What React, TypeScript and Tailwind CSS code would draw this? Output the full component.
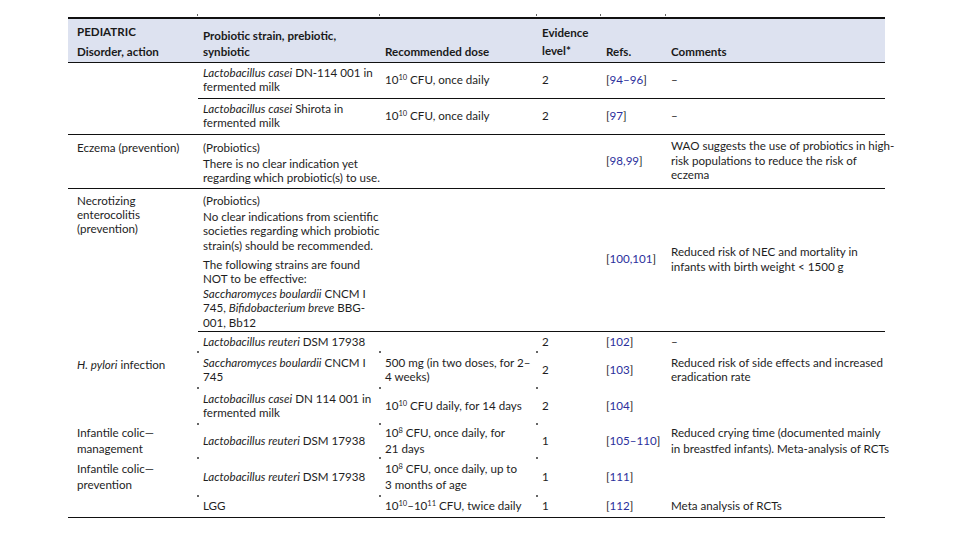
import React from "react";

const Ref = ({ n }: { n: string }) => (
  <span>
    [<span className="text-[#2b2f9c]">{n}</span>]
  </span>
);

const Tick = () => (
  <span className="absolute -top-[1px] -left-[1px] w-[2px] h-[2px] bg-[#666]" />
);

const HeadTick = () => (
  <span className="absolute -top-[5px] -left-[1px] w-[1px] h-[2px] bg-[#666]" />
);

const Sup = ({ v }: { v: string }) => (
  <sup className="text-[7.5px] -top-[4px]">{v}</sup>
);

const cell = "align-middle pl-[5px] pr-[2px] leading-[14.5px] whitespace-nowrap";
const first = "align-middle pl-[9px] pr-[2px] leading-[14.5px] whitespace-nowrap";

export default function App() {
  return (
    <div
      className="w-[960px] h-[540px] bg-white text-[#1e1e1e] text-[11.6px] overflow-hidden"
      style={{ fontFamily: "Lato, 'Open Sans', sans-serif" }}
    >
      <div className="pt-[17px] pl-[68px]">
        <table className="w-[817px] table-fixed border-collapse">
          <colgroup>
            <col className="w-[130px]" />
            <col className="w-[182px]" />
            <col className="w-[157px]" />
            <col className="w-[64px]" />
            <col className="w-[65px]" />
            <col className="w-[219px]" />
          </colgroup>
          <thead>
            <tr className="h-[44px] bg-[#dde2f0] border-t-2 border-b border-[#111] text-[#1a1a1a]">
              <th className="relative align-bottom text-left font-bold pl-[9px] pb-[2px] leading-[16px]">
                <div className="mb-[4px]">PEDIATRIC</div>
                <div>Disorder, action</div>
              </th>
              <th className="relative align-bottom text-left font-bold pl-[5px] pb-[2px] leading-[16px]">
                <HeadTick />
                <div>Probiotic strain, prebiotic,</div>
                <div>synbiotic</div>
              </th>
              <th className="relative align-bottom text-left font-bold pl-[5px] pb-[2px] leading-[16px]">
                <HeadTick />
                Recommended dose
              </th>
              <th className="relative align-bottom text-left font-bold pl-[5px] pb-[2px] leading-[18px]">
                <HeadTick />
                <div>Evidence</div>
                <div>level*</div>
              </th>
              <th className="relative align-bottom text-left font-bold pl-[5px] pb-[2px] leading-[16px]">
                <HeadTick />
                Refs.
              </th>
              <th className="relative align-bottom text-left font-bold pl-[5px] pb-[2px] leading-[16px]">
                <HeadTick />
                Comments
              </th>
            </tr>
          </thead>
          <tbody>
            {/* Group 1 */}
            <tr className="h-[36px]">
              <td rowSpan={2} className={`${first} border-b border-[#111]`}></td>
              <td className={`${cell} border-b border-[#111]`}>
                <i>Lactobacillus casei</i> DN-114 001 in
                <br />
                fermented milk
              </td>
              <td className={`${cell} border-b border-[#111]`}>
                10<Sup v="10" /> CFU, once daily
              </td>
              <td className={`${cell} border-b border-[#111]`}>2</td>
              <td className={`${cell} border-b border-[#111]`}>
                <Ref n="94–96" />
              </td>
              <td className={`${cell} border-b border-[#111]`}>–</td>
            </tr>
            <tr className="h-[36px] border-b border-[#111]">
              <td className={cell}>
                <i>Lactobacillus casei</i> Shirota in
                <br />
                fermented milk
              </td>
              <td className={cell}>
                10<Sup v="10" /> CFU, once daily
              </td>
              <td className={cell}>2</td>
              <td className={cell}>
                <Ref n="97" />
              </td>
              <td className={cell}>–</td>
            </tr>

            {/* Eczema */}
            <tr className="h-[54px] border-b border-[#111]">
              <td className={`${first} !align-top pt-[6px]`}>Eczema (prevention)</td>
              <td className={`${cell} !align-top pt-[6px]`}>
                <p className="mb-[1.5px]">(Probiotics)</p>
                <p>
                  There is no clear indication yet
                  <br />
                  regarding which probiotic(s) to use.
                </p>
              </td>
              <td className={cell}></td>
              <td className={cell}></td>
              <td className={cell}>
                <Ref n="98,99" />
              </td>
              <td className={cell}>
                WAO suggests the use of probiotics in high-
                <br />
                risk populations to reduce the risk of
                <br />
                eczema
              </td>
            </tr>

            {/* NEC */}
            <tr className="h-[143px]">
              <td className={`${first} !align-top pt-[5px] leading-[14px]`}>
                Necrotizing
                <br />
                enterocolitis
                <br />
                (prevention)
              </td>
              <td className={`${cell} !align-top pt-[5px] border-b border-[#111]`}>
                <p className="mb-[1.5px]">(Probiotics)</p>
                <p className="mb-[4.5px]">
                  No clear indications from scientific
                  <br />
                  societies regarding which probiotic
                  <br />
                  strain(s) should be recommended.
                </p>
                <p>
                  The following strains are found
                  <br />
                  NOT to be effective:
                  <br />
                  <i>Saccharomyces boulardii</i> CNCM I
                  <br />
                  745, <i>Bifidobacterium breve</i> BBG-
                  <br />
                  001, Bb12
                </p>
              </td>
              <td className={`${cell} border-b border-[#111]`}></td>
              <td className={`${cell} border-b border-[#111]`}></td>
              <td className={`${cell} border-b border-[#111]`}>
                <Ref n="100,101" />
              </td>
              <td className={`${cell} border-b border-[#111]`}>
                Reduced risk of NEC and mortality in
                <br />
                infants with birth weight &lt; 1500 g
              </td>
            </tr>

            {/* H. pylori */}
            <tr className="h-[21px]">
              <td className={first}></td>
              <td className={cell}>
                <i>Lactobacillus reuteri</i> DSM 17938
              </td>
              <td className={cell}></td>
              <td className={cell}>2</td>
              <td className={cell}>
                <Ref n="102" />
              </td>
              <td className={cell}>–</td>
            </tr>
            <tr className="h-[36px]">
              <td className={`${first} !align-top pt-[6px]`}>
                <i>H. pylori</i> infection
              </td>
              <td className={`${cell} relative`}>
                <Tick />
                <i>Saccharomyces boulardii</i> CNCM I
                <br />
                745
              </td>
              <td className={`${cell} relative`}>
                <Tick />
                500 mg (in two doses, for 2–
                <br />4 weeks)
              </td>
              <td className={`${cell} relative`}>
                <Tick />2
              </td>
              <td className={cell}>
                <Ref n="103" />
              </td>
              <td className={cell}>
                Reduced risk of side effects and increased
                <br />
                eradication rate
              </td>
            </tr>
            <tr className="h-[36px]">
              <td className={first}></td>
              <td className={`${cell} relative`}>
                <Tick />
                <i>Lactobacillus casei</i> DN 114 001 in
                <br />
                fermented milk
              </td>
              <td className={`${cell} relative`}>
                <Tick />
                10<Sup v="10" /> CFU daily, for 14 days
              </td>
              <td className={`${cell} relative`}>
                <Tick />2
              </td>
              <td className={cell}>
                <Ref n="104" />
              </td>
              <td className={cell}></td>
            </tr>

            {/* Infantile colic */}
            <tr className="h-[34px]">
              <td className={`${first} leading-[16px]`}>
                Infantile colic—
                <br />
                management
              </td>
              <td className={`${cell} relative`}>
                <Tick />
                <i>Lactobacillus reuteri</i> DSM 17938
              </td>
              <td className={`${cell} relative leading-[16px]`}>
                <Tick />
                10<Sup v="8" /> CFU, once daily, for
                <br />
                21 days
              </td>
              <td className={`${cell} relative`}>
                <Tick />1
              </td>
              <td className={cell}>
                <Ref n="105–110" />
              </td>
              <td className={`${cell} leading-[16px]`}>
                Reduced crying time (documented mainly
                <br />
                in breastfed infants). Meta-analysis of RCTs
              </td>
            </tr>
            <tr className="h-[38px]">
              <td className={`${first} leading-[16px]`}>
                Infantile colic—
                <br />
                prevention
              </td>
              <td className={`${cell} relative`}>
                <Tick />
                <i>Lactobacillus reuteri</i> DSM 17938
              </td>
              <td className={`${cell} relative leading-[16px]`}>
                <Tick />
                10<Sup v="8" /> CFU, once daily, up to
                <br />3 months of age
              </td>
              <td className={`${cell} relative`}>
                <Tick />1
              </td>
              <td className={cell}>
                <Ref n="111" />
              </td>
              <td className={cell}></td>
            </tr>
            <tr className="h-[21px] border-b border-[#111]">
              <td className={first}></td>
              <td className={`${cell} relative`}>
                <Tick />
                LGG
              </td>
              <td className={`${cell} relative`}>
                <Tick />
                10<Sup v="10" />–10<Sup v="11" /> CFU, twice daily
              </td>
              <td className={`${cell} relative`}>
                <Tick />1
              </td>
              <td className={cell}>
                <Ref n="112" />
              </td>
              <td className={cell}>Meta analysis of RCTs</td>
            </tr>
          </tbody>
        </table>
      </div>
    </div>
  );
}
